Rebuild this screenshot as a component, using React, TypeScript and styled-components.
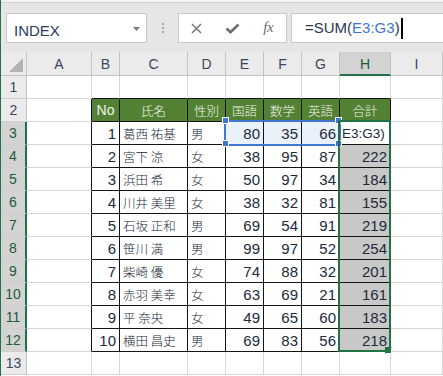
import React from "react";
import styled, { createGlobalStyle } from "styled-components";

const GREEN = "#217346";
const GRID = "#d6d6d6";
const BLACK = "#141414";
const HEAD_BG = "#ebebeb";
const HEAD_LINE = "#c3c3c3";
const ACTIVE_HEAD = "#d3d3d3";
const TEXT = "#222a3a";
const REF_BLUE = "#3f76d2";

const Global = createGlobalStyle`
  html, body { margin: 0; padding: 0; background: #fff; }
  body { font-family: "Liberation Sans", Arial, sans-serif; }
  #root { width: 443px; height: 376px; }
`;

const Window = styled.div`
  width: 443px;
  height: 376px;
  overflow: hidden;
  box-sizing: border-box;
  border-left: 1px solid ${GREEN};
  background: #fff;
  display: flex;
  flex-direction: column;
`;

const TopStrip = styled.div`
  height: 2px;
  background: #f3f3f3;
  border-bottom: 1px solid #d2d2d2;
  flex: none;
`;

const FormulaRow = styled.div`
  height: 49px;
  flex: none;
  box-sizing: border-box;
  background: #e6e6e6;
  display: flex;
  align-items: flex-start;
  padding: 10px 0 0 5px;
`;

const NameBox = styled.div`
  width: 141px;
  height: 30px;
  box-sizing: border-box;
  background: #fff;
  border: 1px solid #c9c9c9;
  display: flex;
  align-items: center;
  padding: 4px 6px 0 7px;
  font-size: 15px;
  color: #2c3b57;
`;

const NameArrow = styled.svg`
  margin-left: auto;
  margin-top: -3px;
`;

const Grip = styled.div`
  width: 31px;
  height: 30px;
  display: flex;
  flex-direction: column;
  align-items: center;
  justify-content: center;
  gap: 2px;
`;

const GripDot = styled.span`
  width: 2px;
  height: 2px;
  background: #a9a9a9;
`;

const FxBox = styled.div`
  width: 109px;
  height: 30px;
  box-sizing: border-box;
  background: #fff;
  border: 1px solid #c9c9c9;
  display: grid;
  grid-template-columns: repeat(3, 1fr);
  align-items: center;
  justify-items: center;
`;

const FxLabel = styled.span`
  font-family: "Liberation Serif", "Times New Roman", serif;
  font-style: italic;
  font-size: 15px;
  color: #6b6b6b;
  letter-spacing: -0.5px;
  margin-top: -2px;
`;

const FormulaBox = styled.div`
  flex: 1;
  margin-left: 4px;
  margin-right: -6px;
  height: 30px;
  box-sizing: border-box;
  background: #fff;
  border: 1px solid #c9c9c9;
  display: flex;
  align-items: center;
  padding: 0 0 1px 13px;
  font-size: 15px;
  color: #2a3854;
  white-space: nowrap;
`;

const RefText = styled.span`
  color: ${REF_BLUE};
`;

const Caret = styled.span`
  display: inline-block;
  width: 2px;
  height: 21px;
  background: #000;
  margin-left: 1px;
  margin-top: 2px;
`;

const Sheet = styled.div`
  position: relative;
  flex: 1;
  display: grid;
  grid-template-columns: 26px 65px 28px 68px 38px 38px 38px 38px 51px 1fr;
  grid-template-rows: 24px repeat(13, 23px) 1fr;
`;

const Corner = styled.div`
  box-sizing: border-box;
  background: ${HEAD_BG};
  border-right: 1px solid ${HEAD_LINE};
  border-bottom: 1px solid ${HEAD_LINE};
  display: flex;
  align-items: flex-end;
  justify-content: flex-end;
  padding: 0 3px 3px 0;
`;

const ColHead = styled.div<{ $active?: boolean }>`
  box-sizing: border-box;
  background: ${(p) => (p.$active ? ACTIVE_HEAD : HEAD_BG)};
  border-right: 1px solid ${HEAD_LINE};
  border-bottom: ${(p) => (p.$active ? `2px solid ${GREEN}` : `1px solid ${HEAD_LINE}`)};
  display: flex;
  align-items: center;
  justify-content: center;
  padding-top: ${(p) => (p.$active ? "1px" : "0")};
  font-size: 14px;
  color: ${(p) => (p.$active ? "#1f5a3a" : "#3a4560")};
`;

const RowHead = styled.div<{ $active?: boolean }>`
  box-sizing: border-box;
  background: ${(p) => (p.$active ? ACTIVE_HEAD : HEAD_BG)};
  border-right: ${(p) => (p.$active ? `2px solid ${GREEN}` : `1px solid ${HEAD_LINE}`)};
  border-bottom: 1px solid #cfcfcf;
  display: flex;
  align-items: center;
  justify-content: center;
  font-size: 14px;
  color: ${(p) => (p.$active ? "#1f5a3a" : "#3a4560")};
`;

type Align = "left" | "right" | "center";

const Cell = styled.div<{ $bg: string; $r: string; $b: string; $align: Align }>`
  box-sizing: border-box;
  background: ${(p) => p.$bg};
  border-right: 1px solid ${(p) => p.$r};
  border-bottom: 1px solid ${(p) => p.$b};
  display: flex;
  align-items: center;
  justify-content: ${(p) =>
    p.$align === "left" ? "flex-start" : p.$align === "right" ? "flex-end" : "center"};
  padding: 0 3px 0 3px;
  overflow: hidden;
  white-space: nowrap;
  color: ${TEXT};
`;

const Num = styled.span`
  font-family: "Liberation Sans", Arial, sans-serif;
  font-size: 15px;
`;

const Jp = styled.span<{ $light?: boolean }>`
  font-family: "Noto Sans CJK JP", "Noto Sans CJK SC", sans-serif;
  font-size: 12.5px;
  font-weight: 300;
  color: ${(p) => (p.$light ? "#f3f3ea" : TEXT)};
`;

const HeadLatin = styled.span`
  font-family: "Liberation Sans", Arial, sans-serif;
  font-size: 14px;
  color: #f3f3ea;
`;

const EditText = styled.span`
  font-family: "Liberation Sans", Arial, sans-serif;
  font-size: 13.5px;
  margin-left: -1px;
`;

const RefBox = styled.div`
  position: absolute;
  left: 223px;
  top: 68px;
  width: 117px;
  height: 26px;
  box-sizing: border-box;
  border: 2px solid ${REF_BLUE};
  pointer-events: none;
`;

const RefHandle = styled.div<{ $x: number; $y: number }>`
  position: absolute;
  left: ${(p) => p.$x}px;
  top: ${(p) => p.$y}px;
  width: 5px;
  height: 5px;
  background: ${REF_BLUE};
  outline: 1px solid #fff;
`;

const SelectBox = styled.div`
  position: absolute;
  left: 337px;
  top: 68px;
  width: 53px;
  height: 232px;
  box-sizing: border-box;
  border: 2px solid ${GREEN};
  pointer-events: none;
`;

const FillHandle = styled.div`
  position: absolute;
  left: 384px;
  top: 295px;
  width: 7px;
  height: 7px;
  box-sizing: border-box;
  background: ${GREEN};
  border: 1px solid #fff;
  border-top-color: transparent;
  border-left-color: transparent;
`;

const COLS = ["A", "B", "C", "D", "E", "F", "G", "H", "I"];

type Row = [number, string, string, number, number, number, number | null];

const DATA: Row[] = [
  [1, "葛西 祐基", "男", 80, 35, 66, null],
  [2, "宮下 涼", "女", 38, 95, 87, 222],
  [3, "浜田 希", "女", 50, 97, 34, 184],
  [4, "川井 美里", "女", 38, 32, 81, 155],
  [5, "石坂 正和", "男", 69, 54, 91, 219],
  [6, "笹川 満", "男", 99, 97, 52, 254],
  [7, "柴崎 優", "女", 74, 88, 32, 201],
  [8, "赤羽 美幸", "女", 63, 69, 21, 161],
  [9, "平 奈央", "女", 49, 65, 60, 183],
  [10, "横田 昌史", "男", 69, 83, 56, 218],
];

const HEADERS = ["No", "氏名", "性別", "国語", "数学", "英語", "合計"];

function cellContent(r: number, c: number): { node: React.ReactNode; align: Align } {
  if (r === 2 && c >= 1 && c <= 7) {
    const h = HEADERS[c - 1];
    return {
      node: c === 1 ? <HeadLatin>{h}</HeadLatin> : <Jp $light>{h}</Jp>,
      align: "center",
    };
  }
  if (r >= 3 && r <= 12 && c >= 1 && c <= 7) {
    const row = DATA[r - 3];
    const v = row[c - 1];
    if (c === 2 || c === 3) return { node: <Jp>{v}</Jp>, align: "left" };
    if (c === 7 && v === null) return { node: <EditText>E3:G3)</EditText>, align: "left" };
    return { node: <Num>{v}</Num>, align: "right" };
  }
  return { node: null, align: "left" };
}

function cellBg(r: number, c: number): string {
  if (r === 2 && c >= 1 && c <= 7) return "#548235";
  if (r === 3 && c >= 4 && c <= 6) return "#eaf1fb";
  if (r >= 4 && r <= 12 && c === 7) return "#c8c8c8";
  return "#fff";
}

function CheckIcon() {
  return (
    <svg width="15" height="11" viewBox="0 0 15 11">
      <path d="M1.5 5.5 L5.5 9.2 L13.5 1.5" fill="none" stroke="#6d6d6d" strokeWidth="2.6" />
    </svg>
  );
}

function CrossIcon() {
  return (
    <svg width="11" height="11" viewBox="0 0 11 11">
      <path d="M1 1 L10 10 M10 1 L1 10" fill="none" stroke="#7a7a7a" strokeWidth="1.6" />
    </svg>
  );
}

export default function App() {
  const cells: React.ReactNode[] = [];
  for (let r = 1; r <= 13; r++) {
    cells.push(
      <RowHead key={`rh${r}`} $active={r >= 3 && r <= 12}>
        {r}
      </RowHead>
    );
    for (let c = 0; c < COLS.length; c++) {
      const inTable = r >= 2 && r <= 12;
      const right = inTable && c <= 7 ? BLACK : GRID;
      const bottom = c >= 1 && c <= 7 && r >= 1 && r <= 12 ? BLACK : GRID;
      const { node, align } = cellContent(r, c);
      cells.push(
        <Cell key={`c${r}-${c}`} $bg={cellBg(r, c)} $r={right} $b={bottom} $align={align}>
          {node}
        </Cell>
      );
    }
  }

  return (
    <>
      <Global />
      <Window>
        <TopStrip />
        <FormulaRow>
          <NameBox>
            INDEX
            <NameArrow width="7" height="4" viewBox="0 0 7 4">
              <path d="M0 0 H7 L3.5 4 Z" fill="#7a7a7a" />
            </NameArrow>
          </NameBox>
          <Grip>
            <GripDot />
            <GripDot />
            <GripDot />
          </Grip>
          <FxBox>
            <CrossIcon />
            <CheckIcon />
            <FxLabel>fx</FxLabel>
          </FxBox>
          <FormulaBox>
            =SUM(<RefText>E3:G3</RefText>)<Caret />
          </FormulaBox>
        </FormulaRow>
        <Sheet>
          <Corner>
            <svg width="14" height="14" viewBox="0 0 14 14">
              <polygon points="14,0 14,14 0,14" fill="#b3b3b3" />
            </svg>
          </Corner>
          {COLS.map((l, i) => (
            <ColHead key={l} $active={i === 7}>
              {l}
            </ColHead>
          ))}
          {cells}
          <RefBox />
          <RefHandle $x={222} $y={66} />
          <RefHandle $x={335} $y={66} />
          <RefHandle $x={222} $y={89} />
          <RefHandle $x={335} $y={89} />
          <SelectBox />
          <FillHandle />
        </Sheet>
      </Window>
    </>
  );
}
